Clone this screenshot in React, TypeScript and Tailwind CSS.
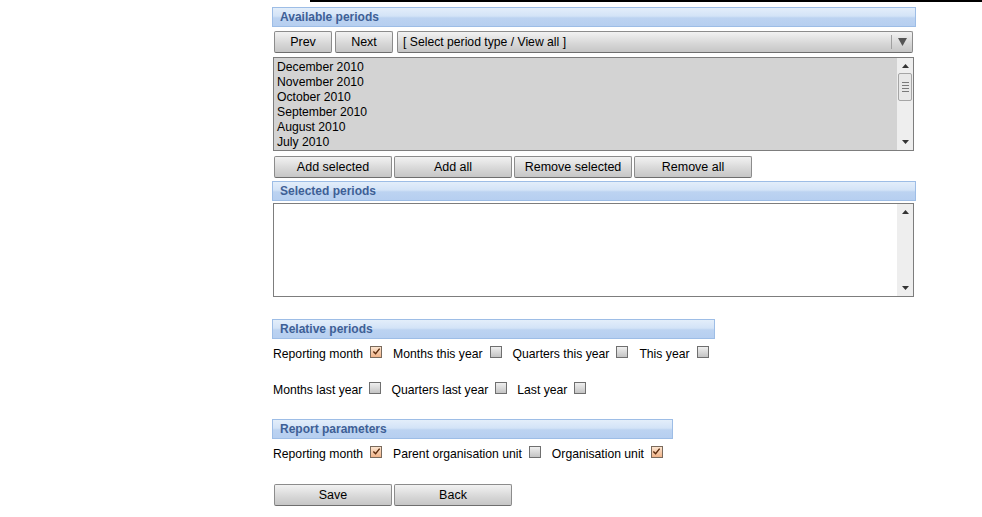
import React from 'react'

const font = "font-['Liberation_Sans',Arial,sans-serif]"

function Heading({ title, width }: { title: string; width: string }) {
  return (
    <div
      className={`${width} h-[20px] border border-[#9dbde6] bg-[linear-gradient(to_bottom,#e3eefa_0%,#d3e3f7_45%,#bcd3f1_55%,#b6cff0_100%)] pl-[7px] text-[12px] leading-[19px] font-bold text-[#3e5f96]`}
    >
      {title}
    </div>
  )
}

function Btn({ label, w = 'w-[118px]' }: { label: string; w?: string }) {
  return (
    <button
      type="button"
      className={`${w} h-[22px] rounded-[2px] border border-[#8c8c8c] border-b-[#6e6e6e] bg-[linear-gradient(to_bottom,#f2f2f2,#d6d6d6_60%,#c6c6c6)] text-[12.5px] leading-[20px] text-black`}
    >
      {label}
    </button>
  )
}

function Check({ on }: { on?: boolean }) {
  if (on) {
    return (
      <span className="relative -top-[3px] inline-flex h-[12px] w-[12px] items-center justify-center border border-[#7a6a5c] bg-[linear-gradient(to_bottom,#fbe4cf,#f0b389)]">
        <svg viewBox="0 0 10 10" width="9" height="9">
          <path d="M1.5 5 L4 7.5 L8.5 1.8" fill="none" stroke="#5b2a0c" strokeWidth="1.6" />
        </svg>
      </span>
    )
  }
  return (
    <span className="relative -top-[3px] inline-block h-[12px] w-[12px] border border-[#6f6f6f] bg-[linear-gradient(to_bottom,#efefef,#c4c4c4)]" />
  )
}

function Opt({ label, on }: { label: string; on?: boolean }) {
  return (
    <span className="flex items-center gap-[7px]">
      <span>{label}</span>
      <Check on={on} />
    </span>
  )
}

function Scrollbar({ thumb }: { thumb?: boolean }) {
  return (
    <div className="flex w-[16px] flex-col items-center bg-[#eeeeee]">
      <svg className="mt-[6px]" viewBox="0 0 7 4" width="7" height="4">
        <path d="M0 4 L3.5 0 L7 4 Z" fill="#333" />
      </svg>
      {thumb ? (
        <div className="mt-[5px] flex h-[28px] w-[14px] flex-col items-center justify-center gap-[2px] rounded-[2px] border border-[#a5a5a5] bg-[#e8e8e8]">
          <span className="h-px w-[7px] bg-[#7a7a7a]" />
          <span className="h-px w-[7px] bg-[#7a7a7a]" />
          <span className="h-px w-[7px] bg-[#7a7a7a]" />
          <span className="h-px w-[7px] bg-[#7a7a7a]" />
        </div>
      ) : null}
      <div className="flex-1" />
      <svg className="mb-[6px]" viewBox="0 0 7 4" width="7" height="4">
        <path d="M0 0 L3.5 4 L7 0 Z" fill="#333" />
      </svg>
    </div>
  )
}

const periods = ['December 2010', 'November 2010', 'October 2010', 'September 2010', 'August 2010', 'July 2010']

export default function App() {
  return (
    <div className={`${font} h-[517px] w-[982px] bg-white text-[12.2px] text-black`}>
      <div className="ml-[310px] h-[2px] bg-black" />

      <div className="ml-[272px] flex w-[644px] flex-col">
        <div className="mt-[5px]">
          <Heading title="Available periods" width="w-[644px]" />
        </div>

        <div className="mt-[4px] flex gap-[3px] pl-[2px]">
          <Btn label="Prev" w="w-[58px]" />
          <Btn label="Next" w="w-[58px]" />
          <div className="ml-[1px] flex h-[22px] w-[516px] items-center rounded-[2px] border border-[#8c8c8c] border-b-[#6e6e6e] bg-[linear-gradient(to_bottom,#f2f2f2,#d6d6d6_60%,#c6c6c6)] pl-[5px] pr-[5px]">
            <span className="flex-1">[ Select period type / View all ]</span>
            <span className="mr-[6px] h-[14px] w-px bg-[#a0a0a0]" />
            <svg viewBox="0 0 9 8" width="9" height="8">
              <path d="M0 0 H9 L4.5 8 Z" fill="#555" />
            </svg>
          </div>
        </div>

        <div className="ml-[1px] mt-[4px] flex h-[94px] w-[641px] border border-[#7d7d7d] bg-[#d3d3d3]">
          <div className="flex-1 overflow-hidden pl-[3px] pt-[2px] leading-[15px]">
            {periods.map(p => (
              <div key={p}>{p}</div>
            ))}
          </div>
          <Scrollbar thumb />
        </div>

        <div className="mt-[5px] flex gap-[2px] pl-[2px]">
          <Btn label="Add selected" />
          <Btn label="Add all" />
          <Btn label="Remove selected" />
          <Btn label="Remove all" />
        </div>

        <div className="mt-[3px]">
          <Heading title="Selected periods" width="w-[644px]" />
        </div>

        <div className="ml-[1px] mt-[2px] flex h-[94px] w-[641px] border border-[#7d7d7d] bg-white">
          <div className="flex-1" />
          <Scrollbar />
        </div>

        <div className="mt-[22px]">
          <Heading title="Relative periods" width="w-[443px]" />
        </div>

        <div className="mt-[8px] flex items-end gap-[11px] pl-[1px] leading-[15px]">
          <Opt label="Reporting month" on />
          <Opt label="Months this year" />
          <Opt label="Quarters this year" />
          <Opt label="This year" />
        </div>
        <div className="mt-[21px] flex items-end gap-[10px] pl-[1px] leading-[15px]">
          <Opt label="Months last year" />
          <Opt label="Quarters last year" />
          <Opt label="Last year" />
        </div>

        <div className="mt-[21px]">
          <Heading title="Report parameters" width="w-[401px]" />
        </div>

        <div className="mt-[8px] flex items-end gap-[11px] pl-[1px] leading-[15px]">
          <Opt label="Reporting month" on />
          <Opt label="Parent organisation unit" />
          <Opt label="Organisation unit" on />
        </div>

        <div className="mt-[22px] flex gap-[2px] pl-[2px]">
          <Btn label="Save" />
          <Btn label="Back" />
        </div>
      </div>
    </div>
  )
}
